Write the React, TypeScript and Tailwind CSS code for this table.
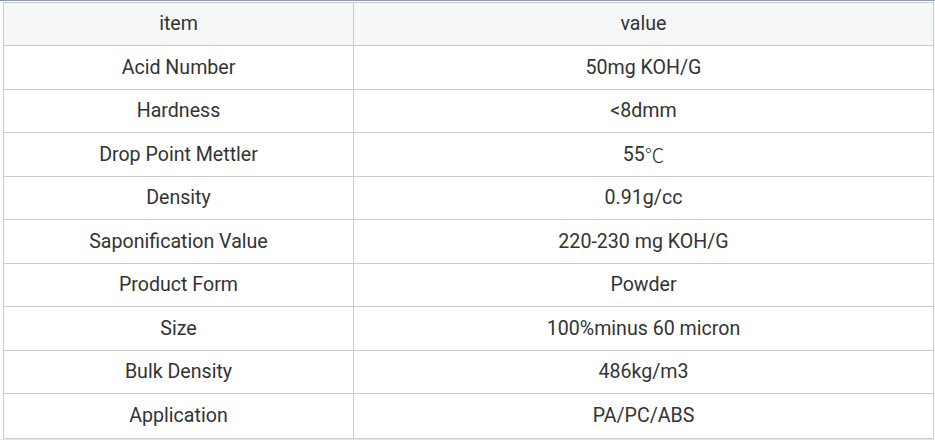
const rows: [string, string][] = [
  ["Acid Number", "50mg KOH/G"],
  ["Hardness", "<8dmm"],
  ["Drop Point Mettler", "55"],
  ["Density", "0.91g/cc"],
  ["Saponification Value", "220-230 mg KOH/G"],
  ["Product Form", "Powder"],
  ["Size", "100%minus 60 micron"],
  ["Bulk Density", "486kg/m3"],
  ["Application", "PA/PC/ABS"],
];

export default function App() {
  return (
    <div
      className="w-[935px] h-[440px] bg-white text-[#333333] text-[19.6px] overflow-hidden"
      style={{ fontFamily: "Roboto, 'Liberation Sans', sans-serif" }}
    >
      <div className="h-px bg-[#8e9bae]" />
      <div className="h-px bg-white" />
      <div className="ml-[3px] w-[931px] border border-[#cccccc]">
        <div className="flex h-[43px] bg-[#f6f7f9] border-b border-[#cccccc]">
          <div className="w-[350px] border-r border-[#cccccc] flex items-center justify-center">item</div>
          <div className="flex-1 flex items-center justify-center">value</div>
        </div>
        {rows.map(([k, v], i) => (
          <div
            key={k}
            className={`flex ${i % 2 === 0 ? "h-[44px]" : "h-[43px]"} ${i < rows.length - 1 ? "border-b border-[#cccccc]" : ""}`}
          >
            <div className="w-[350px] border-r border-[#cccccc] flex items-center justify-center">{k}</div>
            <div className="flex-1 flex items-center justify-center">
              {v}
              {k === "Drop Point Mettler" && (
                <span style={{ fontFamily: "'Noto Sans CJK SC', sans-serif" }} className="font-light">℃</span>
              )}
            </div>
          </div>
        ))}
      </div>
      <div className="h-[2px] bg-[#e6e6e6]" />
    </div>
  );
}
